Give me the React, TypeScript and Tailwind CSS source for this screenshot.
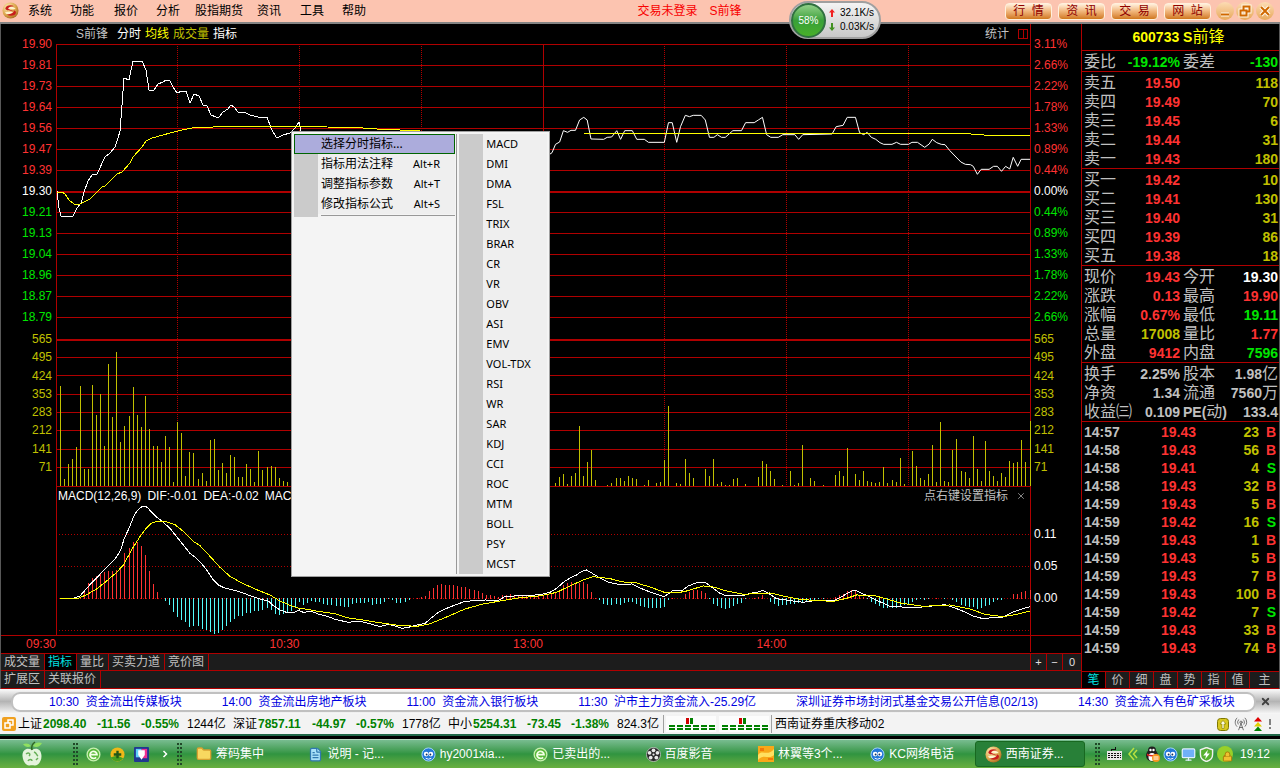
import React from "react";
import { Folder, FileText, Monitor, Lock, X, RadioTower } from "lucide-react";

const RED = "#b00000";

const priceLabels = ["19.90", "19.81", "19.73", "19.64", "19.56", "19.47", "19.39", "19.30", "19.21", "19.13", "19.04", "18.96", "18.87", "18.79"];
const pctLabels = ["3.11%", "2.66%", "2.22%", "1.78%", "1.33%", "0.89%", "0.44%", "0.00%", "0.44%", "0.89%", "1.33%", "1.78%", "2.22%", "2.66%"];
const volLabels = ["565", "495", "424", "353", "283", "212", "141", "71"];

const volume = [
  100, 7, 22, 27, 39, 100, 17, 17, 101, 71, 92, 40, 122, 69, 134, 44, 60, 70, 99, 71, 59, 90, 57, 40, 40, 24, 50, 39, 4, 64,
  53, 10, 34, 33, 7, 13, 5, 46, 47, 16, 23, 13, 31, 29, 9, 9, 22, 17, 4, 35, 16, 19, 20, 19, 8, 5, 4, 6, 9, 5,
  12, 8, 6, 10, 14, 7, 5, 9, 3, 6, 8, 11, 5, 4, 7, 9, 12, 6, 3, 5, 8, 6, 4, 9, 5, 7, 3, 6, 8, 4,
  5, 9, 6, 3, 7, 8, 5, 4, 6, 9, 3, 5, 7, 4, 8, 6, 3, 5, 9, 4, 6, 8, 5, 3, 7, 4, 6, 5, 8, 3, 0, 0,
  3, 9, 12, 2, 10, 13, 60, 10, 24, 36, 6, 0, 0, 1, 3, 8, 8, 5, 10, 8, 7, 0, 1, 6, 0, 3, 4, 26, 80, 0, 3, 2, 27, 13, 8, 0, 0,
  17, 10, 27, 2, 4, 1, 1, 7, 8, 0, 2, 0, 0, 9, 25, 22, 15, 7, 0, 1, 0, 15, 1, 3, 41, 0, 8, 5, 0, 1, 0, 0, 11, 15, 10, 38, 0,
  12, 6, 15, 5, 4, 3, 4, 19, 3, 6, 4, 28, 2, 0, 35, 20, 8, 6, 12, 41, 4, 64, 5, 4, 36, 47, 15, 14, 8, 50, 17, 5, 45, 15, 10,
  5, 13, 9, 25, 23, 24, 46, 24, 65,
];

const macd = [
  0, 0, 0, 0, 1, 2, 8, 16, 21, 23, 25, 27, 28, 28, 29, 31, 46, 51, 57, 57, 53, 44, 28, 15, 7, 0, -3, -7, -14, -19, -22, -24, -29,
  -28, -28, -31, -32, -34, -36, -35, -32, -28, -24, -21, -18, -18, -15, -15, -13, -13, -12, -10, -12, -16, -17, -16,
  -14, -13, -9, -4, -7, -5, -3, -4, -4, -6, -7, -7, -8, -8, -9, -9, -6, -5, -5, -5, -4, -7, -6, -6, -4, -1, -2, -5, -5, -4,
  -2, 0, 1, 2, 3, 8, 11, 14, 15, 14, 14, 14, 13, 12, 12, 10, 9, 8, 6, 4, 4, 3, 2, 4, 4, 5, 4, 3, 3, 3, 3, 3, 3, 4, 4, 5, 7, 9,
  14, 16, 17, 15, 16, 17, 15, 7, 1, -2, -6, -7, -7, -6, -7, -5, -4, -4, -6, -8, -9, -10, -10, -10, -10, -9, -2, 1, 0, 0, 5, 7,
  9, 9, 8, 6, -1, -6, -8, -10, -11, -10, -8, -6, -5, -1, 0, 1, 2, 4, 0, -4, -6, -8, -7, -7, -6, -6, -5, -4, -3, -3, -2, -1,
  -1, 0, 0, 2, 4, 5, 8, 9, 9, 4, 2, -1, -4, -6, -8, -10, -10, -10, -10, -8, -7, -6, -4, -2, -1, -2, -1, 0, 1, 0, -1, 0, -2,
  -4, -7, -8, -9, -9, -11, -10, -8, -7, -4, -2, -2, 0, 0, 5, 5, 7, 8, 9,
];

const minuteX = (i: number) => Math.floor(56 + ((i + 1) * 974) / 240);

function PriceChart() {
  return (
    <svg viewBox="56 44 975 443" preserveAspectRatio="none" shapeRendering="crispEdges" className="block h-[443px] w-full" aria-label="分时走势">
      {[44, 65, 86, 107, 128, 149, 170, 212, 233, 254, 275, 296, 317, 357, 375, 394, 412, 430, 449, 467, 486].map((y) => (
        <rect key={y} x="56" y={y} width="975" height="1" fill={RED} />
      ))}
      <rect x="56" y="191" width="975" height="2" fill={RED} />
      <rect x="56" y="339" width="975" height="2" fill={RED} />
      {[177, 299, 421, 664, 786, 908].map((x) => (
        <line key={x} x1={x + 0.5} x2={x + 0.5} y1="46" y2="486" stroke={RED} strokeDasharray="1 1" />
      ))}
      <rect x="543" y="44" width="1" height="443" fill={RED} />
      <rect x="56" y="44" width="1" height="443" fill={RED} />
      <rect x="1030" y="44" width="1" height="443" fill={RED} />
      {volume.map((v, i) => (v > 0 ? <rect key={i} x={minuteX(i)} y={486 - v} width="1" height={v} fill="#c0c000" /> : null))}
      <g fill="none" stroke="#ffffff">
        <polyline points="57,191 59,208 61,216 73,216 77,208 81,203 82,200 84,192 88,181 92,175 97,174 105,157 110,153 115,147 118,138 120,131 122,105 124,78 129,80 133,61 142,61 146,70 149,90 154,90 158,84 163,82 166,80 170,81 173,87 177,93 182,91 186,91 190,103 194,94 199,96 203,105 207,106 211,115 216,117 219,117 223,112 228,109 231,105 234,107 238,112 246,113 250,115 258,117 267,117 271,128 276,137 279,137 283,135 290,133 295,128 299,122 301,131 330,137 400,134 500,138 540,158 549,155" />
        <polyline
          transform="translate(540 100) scale(0.3444 0.3333)"
          vectorEffect="non-scaling-stroke"
          points="28,163 35,158 45,133 57,126 68,92 80,97 90,91 103,91 115,60 127,52 137,60 148,117 185,118 195,112 208,111 223,92 234,118 246,92 268,92 281,118 303,118 315,127 361,127 373,68 384,68 397,127 408,80 422,46 434,50 445,46 468,46 480,60 492,112 505,112 515,104 527,112 538,112 560,92 585,92 597,68 622,68 634,60 646,52 658,104 670,112 692,112 705,104 740,104 751,118 763,104 848,102 860,80 880,76 892,52 916,52 928,98 940,104 950,97 962,112 975,118 987,128 998,133 1022,133 1035,127 1047,133 1070,133 1080,127 1096,127 1117,142 1130,132 1139,118 1152,128 1165,133 1176,134 1190,152 1222,186 1235,193 1250,194 1258,199 1270,223 1281,208 1304,208 1317,199 1328,199 1340,214 1352,199 1364,207 1374,172 1387,199 1397,178 1423,178"
        />
      </g>
      <polyline
        fill="none"
        stroke="#ffff00"
        points="57,192 62,192 65,194 69,200 74,204 80,204 90,199 97,192 102,187 105,186 110,181 117,174 122,172 130,163 133,157 142,147 146,141 152,138 163,135 170,133 182,130 192,128 213,127 233,126 300,126 327,127 363,128 377,129 400,130 420,131 458,133 549,134 584,134 585,133 958,133 984,135 1015,135 1030,136"
      />
    </svg>
  );
}

function MacdChart() {
  return (
    <svg viewBox="56 504 975 132" preserveAspectRatio="none" shapeRendering="crispEdges" className="block h-[132px] w-full" aria-label="MACD">
      {[534, 566, 598, 630].map((y) => (
        <line key={y} x1="59" x2="1030" y1={y + 0.5} y2={y + 0.5} stroke={RED} strokeDasharray="1 2" />
      ))}
      <rect x="56" y="504" width="1" height="132" fill={RED} />
      <rect x="1030" y="504" width="1" height="132" fill={RED} />
      {macd.map((v, i) =>
        v === 0 ? null : (
          <rect key={i} x={minuteX(i)} y={v > 0 ? 599 - v : 598} width="1" height={Math.abs(v)} fill={v > 0 ? "#ff3232" : "#54fcfc"} />
        ),
      )}
      <g fill="none" stroke="#ffffff">
        <polyline
          transform="translate(0 485) scale(0.3333)"
          vectorEffect="non-scaling-stroke"
          points="180,340 220,340 240,333 255,316 277,291 300,268 325,242 345,222 362,196 373,160 388,128 400,97 410,79 422,67 432,63 442,67 455,82 470,96 490,112 510,130 530,155 550,180 570,205 590,220 610,242 625,262 640,285 655,300 672,308 700,315 730,324 755,334 780,342 805,348 820,362 840,375 862,383 880,384 900,374"
        />
        <polyline
          transform="translate(285 570) scale(0.3333)"
          vectorEffect="non-scaling-stroke"
          points="42,122 55,127 80,124 100,132 130,140 150,148 190,157 220,153 250,160 285,170 310,163 330,168 350,175 370,172 395,165 420,160 440,143 460,127 480,117 505,107 540,94 600,90 640,91 660,80 700,77 750,75 770,73"
        />
        <polyline
          transform="translate(540 380) scale(0.3333)"
          vectorEffect="non-scaling-stroke"
          points="0,644 30,637 50,625 70,607 90,594 110,585 125,574 140,570 155,579 180,594 205,607 240,614 275,612 300,624 330,636 373,650 397,633 425,633 445,618 470,608 495,606 510,618 540,640 560,648 605,648 630,640 655,636 667,631 685,640 710,656 750,662 790,667 825,662 880,663 905,650 930,636 945,630 970,642 1000,656 1030,670 1050,680 1115,682 1150,681 1215,674 1240,682 1270,694 1300,708 1325,715 1350,714 1390,711 1420,696 1450,686 1470,680"
        />
      </g>
      <g fill="none" stroke="#ffff00">
        <polyline
          transform="translate(0 485) scale(0.3333)"
          vectorEffect="non-scaling-stroke"
          points="180,340 235,340 260,329 290,312 320,288 350,262 370,240 385,213 400,186 420,155 440,128 455,114 475,108 500,111 525,119 550,139 580,169 600,182 630,214 660,247 690,274 725,294 770,314 810,330 840,348 870,361 900,371"
        />
        <polyline
          transform="translate(285 570) scale(0.3333)"
          vectorEffect="non-scaling-stroke"
          points="42,114 100,124 150,131 185,143 240,151 290,159 340,166 395,169 430,163 480,143 540,117 590,103 640,94 700,84 740,80 768,77"
        />
        <polyline
          transform="translate(540 380) scale(0.3333)"
          vectorEffect="non-scaling-stroke"
          points="0,648 50,637 90,618 130,600 160,590 210,596 250,606 290,609 330,621 373,637 430,636 470,624 490,618 520,621 560,633 610,643 690,639 730,648 780,658 830,662 880,664 920,655 950,645 1000,646 1040,657 1085,670 1150,679 1230,675 1290,687 1335,703 1390,710 1430,703 1470,693"
        />
      </g>
      <rect x="56" y="635" width="975" height="1" fill={RED} />
    </svg>
  );
}

function Logo() {
  return (
    <svg viewBox="0 0 18 18" className="size-[17px] shrink-0">
      <defs>
        <radialGradient id="gold" cx="0.35" cy="0.3" r="0.8">
          <stop offset="0" stopColor="#fff0b8" />
          <stop offset="0.6" stopColor="#dba54c" />
          <stop offset="1" stopColor="#a06018" />
        </radialGradient>
      </defs>
      <circle cx="9" cy="9" r="8.500" fill="url(#gold)" />
      <path d="M6 7 C7.500 5 12 4.500 14.500 7 C12.500 8 10 7.500 6 7Z" fill="#fff4d0" />
      <path d="M3 11 C6 10 10 10 12 11.500 C9 13.500 5 13.500 3 11Z" fill="#fff4d0" />
      <path d="M13 4.500 C9 2.500 4 3.500 3.500 7 C4 9.500 9 8.800 12 10.200 C11.500 8.500 7.500 8.500 6.500 7 C7 5 10 4.800 13 4.500Z" fill="#c81c1c" />
      <path d="M12 8.500 C13.500 10 12 12.500 5 13.500 C9 15.800 14.500 14.500 14.800 11.500 C15 9.800 13.500 9 12 8.500Z" fill="#c81c1c" />
    </svg>
  );
}

function BrowserIcon() {
  return (
    <svg viewBox="0 0 16 16" className="size-[15px] shrink-0">
      <circle cx="8" cy="8" r="6.800" fill="#58b838" stroke="#c8f0b0" strokeWidth="1.400" />
      <path d="M4 8.200H11.800A3.800 3.800 0 1 0 10.800 11" fill="none" stroke="#f4ffe8" strokeWidth="1.800" />
    </svg>
  );
}

function CallIcon() {
  return (
    <svg viewBox="0 0 16 16" className="size-[15px] shrink-0">
      <circle cx="8" cy="8" r="7" fill="#2478d8" stroke="#a8d8ff" />
      <circle cx="5.500" cy="7.500" r="2.500" fill="#fff" />
      <circle cx="10.500" cy="7.500" r="2.500" fill="#fff" />
      <circle cx="6" cy="8" r="1" fill="#103060" />
      <circle cx="10" cy="8" r="1" fill="#103060" />
      <path d="M5 12 Q8 14 11 12" stroke="#fff" fill="none" />
    </svg>
  );
}

const menuItems = [
  ["系统", "w-[42px]"],
  ["功能", "w-[44px]"],
  ["报价", "w-[42px]"],
  ["分析", "w-[39px]"],
  ["股指期货", "w-[62px]"],
  ["资讯", "w-[43px]"],
  ["工具", "w-[42px]"],
  ["帮助", "w-[42px]"],
];

function TitleBar() {
  return (
    <header className="flex h-6 items-start border-b-2 border-[#848484] bg-[#fcc4b0] pl-[2px]">
      <div className="flex h-[21px] items-center">
        <Logo />
      </div>
      <nav className="flex h-[21px] items-center pl-[9px] text-xs text-black">
        {menuItems.map(([t, w]) => (
          <button key={t} className={`${w} text-left whitespace-nowrap`}>
            {t}
          </button>
        ))}
      </nav>
      <div className="flex h-[21px] flex-1 items-center justify-center gap-3 pr-[10px] text-xs text-[#f80000]">
        <span>交易未登录</span>
        <span>S前锋</span>
      </div>
      <div className="flex h-[21px] items-center gap-[6px] pt-[2px] text-xs text-[#900000]">
        {["行  情", "资  讯", "交  易", "网  站"].map((t) => (
          <button key={t} className="h-[17px] w-[47px] rounded-[4px] border border-[#fff0dc] bg-linear-to-b from-[#fff0dc] via-[#f0b478] to-[#d07818] leading-[15px] whitespace-pre">
            {t}
          </button>
        ))}
      </div>
      <div className="flex h-[21px] items-center gap-[2px] pr-[6px] pl-[5px]">
        {["最小化", "还原", "关闭"].map((t, i) => (
          <button key={t} aria-label={t} className="size-[18px] rounded-full bg-linear-to-b from-[#fcdcb4] to-[#e8a858]">
            <svg viewBox="0 0 18 18" className="size-[18px]" fill="none">
              {[0, 1].map((k) => (
                <g key={k} stroke={k ? "#d06800" : "#fff8e8"} strokeWidth={k ? 2 : 4}>
                  {i === 0 && <path d="M5 12.500h8" />}
                  {i === 1 && <path d="M4.500 8.500h6v5h-6zM7.500 8V4.500h6v5H11" />}
                  {i === 2 && <path d="M5 5l8 8M13 5l-8 8" />}
                </g>
              ))}
            </svg>
          </button>
        ))}
      </div>
    </header>
  );
}

function SpeedWidget() {
  return (
    <div className="absolute top-px left-[789px] flex h-[38px] w-[92px] items-center rounded-full border-2 border-[#a0a0a0] bg-linear-to-b from-[#f4f4f4] to-[#c8c8c8] text-black">
      <div className="flex size-[35px] shrink-0 items-center justify-center rounded-full border-2 border-[#307040] bg-linear-to-b from-[#90d088] via-[#38a038] to-[#48b028] text-[10px] text-white">58%</div>
      <div className="pl-[2px] text-[10px] leading-[14px]">
        <div className="flex gap-1">
          <svg viewBox="0 0 8 8" className="mt-[3px] size-2">
            <path d="M4 0l3 3.500H5V8H3V3.500H1z" fill="#f02020" />
          </svg>
          32.1K/s
        </div>
        <div className="flex gap-1">
          <svg viewBox="0 0 8 8" className="mt-[3px] size-2">
            <path d="M4 8l3-3.500H5V0H3v4.500H1z" fill="#409020" />
          </svg>
          0.03K/s
        </div>
      </div>
    </div>
  );
}

const axisTone = (i: number) => (i < 7 ? "text-[#ff3232]" : i === 7 ? "text-white" : "text-[#00e600]");

function AxisLabels({ labels, className }: { labels: string[]; className: string }) {
  return (
    <div className={`flex flex-col pt-[10px] text-xs ${className}`}>
      {labels.map((t, i) => (
        <span key={i} className={`h-[21px] leading-[21px] ${axisTone(i)}`}>
          {t}
        </span>
      ))}
      <div className="mt-[2px] flex h-[146px] flex-col justify-between text-[#c0c000]">
        {volLabels.map((t) => (
          <span key={t} className="h-[18px] leading-[18px]">
            {t}
          </span>
        ))}
      </div>
    </div>
  );
}

function ChartPane() {
  return (
    <section className="flex min-w-0 flex-1 flex-col border-l border-[#585858]">
      <div className="flex">
        <AxisLabels labels={priceLabels} className="w-[55px] shrink-0 pr-1 text-right" />
        <div className="min-w-0 flex-1">
          <div className="flex h-5 items-center gap-1 border-r border-[#b00000] pr-[2px] pl-5 text-xs text-[#c0c0c0]">
            <span className="mr-[5px]">S前锋</span>
            <span className="text-white">分时</span>
            <span className="text-[#ffff00]">均线</span>
            <span className="text-[#c0c000]">成交量</span>
            <span className="text-white">指标</span>
            <span className="mr-[5px] ml-auto">统计</span>
            <span className="flex h-[10px] w-[10px] border border-[#b00000]">
              <span className="ml-auto w-1 border-l border-[#b00000]" />
            </span>
          </div>
          <PriceChart />
          <div className="flex h-[17px] items-center border-x border-[#b00000] pr-1 pl-px text-xs whitespace-nowrap text-white">
            <span>MACD(12,26,9)</span>
            <span className="pl-[6px]">DIF:-0.01</span>
            <span className="pl-[6px]">DEA:-0.02</span>
            <span className="pl-[6px]">MACD:0.01</span>
            <span className="mr-2 ml-auto text-[#c0c0c0]">点右键设置指标</span>
            <button aria-label="关闭指标" className="text-[#a0a0a0]">
              <X size={10} strokeWidth={2} />
            </button>
          </div>
          <MacdChart />
        </div>
        <div className="w-[50px] shrink-0">
          <AxisLabels labels={pctLabels} className="pl-[3px]" />
          <div className="mt-[42px] flex flex-col pl-[3px] text-xs text-white">
            {["0.11", "0.05", "0.00"].map((t) => (
              <span key={t} className="h-8 leading-8">
                {t}
              </span>
            ))}
          </div>
        </div>
      </div>
      <div className="-mt-px flex h-[17px] text-xs leading-4 text-[#ff3232]">
        <span className="w-[55px] border-t border-[#b00000] text-right">09:30</span>
        <div className="grid flex-1 grid-cols-4 border-t border-r border-[#b00000] text-right">
          <span>10:30</span>
          <span>13:00</span>
          <span>14:00</span>
        </div>
        <span className="w-[50px] border-t border-[#b00000]" />
      </div>
      <div className="mt-px flex h-[17px] border-t border-[#b00000] bg-[#1c1c1c] text-xs text-[#c0c0c0]">
        {["成交量", "指标", "量比", "买卖力道", "竞价图"].map((t) => (
          <button key={t} className={`border-r border-[#b00000] pr-1 pl-[3px] leading-4 ${t === "指标" ? "bg-black text-[#00e0e0]" : ""}`}>
            {t}
          </button>
        ))}
        <div className="ml-auto flex text-[#e0e0e0]">
          {["+", "−", "0"].map((t) => (
            <button key={t} className="w-4 border-l border-[#b00000] text-[11px] leading-4 last:w-[19px]">
              {t}
            </button>
          ))}
        </div>
      </div>
      <div className="flex h-[19px] border-y border-[#b00000] bg-[#1c1c1c] text-xs text-[#c0c0c0]">
        {["扩展区", "关联报价"].map((t) => (
          <button key={t} className="border-r border-[#b00000] pr-1 pl-[3px] leading-[17px]">
            {t}
          </button>
        ))}
      </div>
    </section>
  );
}

const R = "text-[#ff3232]";
const G = "text-[#00e600]";
const Y = "text-[#c0c000]";
const C = "text-[#c0c0c0]";
const W = "text-white";

type QuoteRow = [string, string, string, string, string, string];

const groups: QuoteRow[][] = [
  [["委比", "-19.12%", G, "委差", "-130", G]],
  [
    ["卖五", "19.50", R, "", "118", Y],
    ["卖四", "19.49", R, "", "70", Y],
    ["卖三", "19.45", R, "", "6", Y],
    ["卖二", "19.44", R, "", "31", Y],
    ["卖一", "19.43", R, "", "180", Y],
  ],
  [
    ["买一", "19.42", R, "", "10", Y],
    ["买二", "19.41", R, "", "130", Y],
    ["买三", "19.40", R, "", "31", Y],
    ["买四", "19.39", R, "", "86", Y],
    ["买五", "19.38", R, "", "18", Y],
  ],
  [
    ["现价", "19.43", R, "今开", "19.30", W],
    ["涨跌", "0.13", R, "最高", "19.90", R],
    ["涨幅", "0.67%", R, "最低", "19.11", G],
    ["总量", "17008", Y, "量比", "1.77", R],
    ["外盘", "9412", R, "内盘", "7596", G],
  ],
  [
    ["换手", "2.25%", C, "股本", "1.98亿", C],
    ["净资", "1.34", C, "流通", "7560万", C],
    ["收益㈢", "0.109", C, "PE(动)", "133.4", C],
  ],
];

const ticks: [string, string, string, string][] = [
  ["14:57", "19.43", "23", "B"],
  ["14:58", "19.43", "56", "B"],
  ["14:58", "19.41", "4", "S"],
  ["14:58", "19.43", "32", "B"],
  ["14:59", "19.43", "5", "B"],
  ["14:59", "19.42", "16", "S"],
  ["14:59", "19.43", "1", "B"],
  ["14:59", "19.43", "5", "B"],
  ["14:59", "19.43", "7", "B"],
  ["14:59", "19.43", "100", "B"],
  ["14:59", "19.42", "7", "S"],
  ["14:59", "19.43", "33", "B"],
  ["14:59", "19.43", "74", "B"],
];

/* Latin and digits are set bold at 14px, Chinese glyphs regular at 16px. */
function Mixed({ text }: { text: string }) {
  return (
    <>
      {text.split(/([\u3200-\u9fff]+)/).map((part, i) =>
        i % 2 ? (
          <span key={i} className="text-base leading-none font-normal">
            {part}
          </span>
        ) : (
          part
        ),
      )}
    </>
  );
}

function QuotePane() {
  return (
    <aside className="flex w-[199px] shrink-0 flex-col border-r border-l border-r-[#585858] border-l-[#b00000] text-sm font-bold">
      <h1 className="h-[27px] border-b border-[#b00000] pr-1 text-center leading-[27px] text-[#ffff00]">
        <Mixed text="600733 S前锋" />
      </h1>
      {groups.map((rows, g) => (
        <div key={g} className="border-b border-[#b00000] pt-px">
          <table className="w-full table-fixed border-collapse whitespace-nowrap">
            <colgroup>
              <col className="w-[44px]" />
              <col className="w-[54px]" />
              <col className="w-[44px]" />
              <col />
            </colgroup>
            <tbody>
              {rows.map((r) => (
                <tr key={r[0]} className="h-[19px] leading-[18px]">
                  <th className="p-0 pl-[2px] text-left text-[#c0c0c0]">
                    <Mixed text={r[0]} />
                  </th>
                  <td className={`p-0 text-right ${r[2]}`}>{r[1]}</td>
                  <td className="p-0 pl-[3px] text-[#c0c0c0]">
                    <Mixed text={r[3]} />
                  </td>
                  <td className={`p-0 pr-px text-right ${r[5]}`}>
                    <Mixed text={r[4]} />
                  </td>
                </tr>
              ))}
            </tbody>
          </table>
        </div>
      ))}
      <table className="mt-px w-full table-fixed border-collapse">
        <colgroup>
          <col className="w-[54px]" />
          <col className="w-[60px]" />
          <col />
          <col className="w-5" />
        </colgroup>
        <tbody>
          {ticks.map((t, i) => (
            <tr key={i} className="h-[18px] leading-[18px]">
              <td className="p-0 pl-[2px] text-[#c0c0c0]">{t[0]}</td>
              <td className="p-0 text-right text-[#ff3232]">{t[1]}</td>
              <td className="p-0 text-right text-[#c0c000]">{t[2]}</td>
              <td className={`p-0 pr-[3px] text-right ${t[3] === "B" ? "text-[#ff3232]" : "text-[#00e600]"}`}>{t[3]}</td>
            </tr>
          ))}
        </tbody>
      </table>
      <div className="mt-auto flex h-[18px] border-y border-[#b00000] bg-[#1c1c1c] text-xs font-normal text-[#c0c0c0]">
        {["笔", "价", "细", "盘", "势", "指", "值", "主"].map((t) => (
          <button key={t} className={`w-6 border-r border-[#b00000] leading-4 last:flex-1 last:border-r-0 ${t === "笔" ? "bg-black text-[#00e0e0]" : ""}`}>
            {t}
          </button>
        ))}
      </div>
    </aside>
  );
}

const subItems = ["MACD", "DMI", "DMA", "FSL", "TRIX", "BRAR", "CR", "VR", "OBV", "ASI", "EMV", "VOL-TDX", "RSI", "WR", "SAR", "KDJ", "CCI", "ROC", "MTM", "BOLL", "PSY", "MCST"];

function ContextMenu() {
  return (
    <div role="menu" className="absolute top-[131px] left-[291px] flex w-[259px] border border-[#a0a0a0] bg-[#f4f4f4] p-[2px] font-['Noto_Sans','Noto_Sans_CJK_SC',sans-serif] text-black">
      <div className="flex w-[163px] flex-col text-xs">
        <button role="menuitem" className="h-5 w-[161px] border border-[#006400] bg-[#acacdc] pl-[26px] text-left leading-[18px]">
          选择分时指标...
        </button>
        {[
          ["指标用法注释", "Alt+R"],
          ["调整指标参数", "Alt+T"],
          ["修改指标公式", "Alt+S"],
        ].map(([t, k]) => (
          <button key={t} role="menuitem" className="flex h-5 w-[161px] items-center border-l-24 border-[#cbcbcb] bg-[#efefef] pr-[15px] pl-[3px]">
            <span>{t}</span>
            <span className="ml-auto text-[11px]">{k}</span>
          </button>
        ))}
        <div className="w-[161px] border-l-24 border-[#cbcbcb] py-px pl-[3px]">
          <div className="h-px bg-[#989898]" />
        </div>
      </div>
      <div className="w-[91px] border-l border-[#989898] pl-[2px] text-[11px]">
        {subItems.map((t) => (
          <button key={t} role="menuitem" className="block h-5 w-full border-l-24 border-[#cbcbcb] bg-[#efefef] pl-[3px] text-left leading-5">
            {t}
          </button>
        ))}
      </div>
    </div>
  );
}

function NewsBar() {
  return (
    <div className="flex h-[25px] items-center bg-linear-to-b from-[#fcfcfc] via-[#b4b4b4] to-[#f8f8f8] pl-[11px]">
      <div className="flex h-5 min-w-0 flex-1 items-center gap-10 overflow-hidden rounded-[9px] border-2 border-[#c0c0c0] bg-white pl-9 text-xs whitespace-nowrap text-[#0000e0]">
        {["10:30 资金流出传媒板块", "14:00 资金流出房地产板块", "11:00 资金流入银行板块", "11:30 沪市主力资金流入-25.29亿", "深圳证券市场封闭式基金交易公开信息(02/13)", "14:30 资金流入有色矿采板块"].map((t) => (
          <a key={t} href="#" className="whitespace-pre">
            {t.replace(" ", "  ")}
          </a>
        ))}
      </div>
      <button aria-label="关闭资讯" className="flex w-6 justify-center pr-[6px] text-[#404040]">
        <X size={11} strokeWidth={4} />
      </button>
    </div>
  );
}

const indices = [
  ["上证", "2098.40", "-11.56", "-0.55%", "1244亿"],
  ["深证", "7857.11", "-44.97", "-0.57%", "1778亿"],
  ["中小", "5254.31", "-73.45", "-1.38%", "824.3亿"],
];

function Meter() {
  return (
    <svg viewBox="0 0 50 16" className="h-4 w-[50px]" shapeRendering="crispEdges">
      <rect width="50" height="16" fill="#fcfcfc" />
      <rect x="20" y="2" width="3" height="6" fill="#d00000" />
      <rect x="24" y="2" width="3" height="6" fill="#008000" />
      {[0, 1, 2, 3, 4, 5].map((i) => (
        <g key={i} fill="#008000">
          <rect x={3 + i * 8} y="9" width="6" height="2" />
          <rect x={3 + i * 8} y="12" width="6" height="2" />
        </g>
      ))}
    </svg>
  );
}

function StatusBar() {
  return (
    <div className="flex h-[22px] items-center border-b-2 border-[#206848] bg-[#f3f3f3] pl-[2px] text-xs whitespace-nowrap text-black">
      <svg viewBox="0 0 14 14" className="mr-[2px] size-[14px] shrink-0">
        <rect width="14" height="14" rx="2" fill="#f0a020" />
        <path d="M3 6h5v5H3zM6 6V3h5v5H8" fill="none" stroke="#fff" strokeWidth="1.500" />
      </svg>
      {indices.map((r) => (
        <div key={r[0]} className="flex w-[215px]">
          <span className="w-[25px]">{r[0]}</span>
          <b className="w-[54px] text-[#008000]">{r[1]}</b>
          <b className="w-[44px] text-[#008000]">{r[2]}</b>
          <b className="w-[46px] text-[#008000]">{r[3]}</b>
          <span>{r[4]}</span>
        </div>
      ))}
      <div className="flex h-[18px] items-center gap-[3px] border-x border-[#a0a0a0] px-[2px]">
        <Meter />
        <Meter />
      </div>
      <span className="pl-[3px]">西南证券重庆移动02</span>
      <div className="ml-auto flex items-center gap-[5px] pr-2">
        <svg viewBox="0 0 12 13" className="h-[13px] w-3">
          <rect x="0.500" y="0.500" width="11" height="12" rx="3" fill="#d8c820" stroke="#807800" />
          <path d="M6 2.500L9 6H7v4.500H5V6H3z" fill="#fffce0" stroke="#807800" strokeWidth="0.600" />
        </svg>
        <RadioTower size={14} strokeWidth={1.5} className="text-[#606060]" />
        <svg viewBox="0 0 10 14" className="h-[14px] w-[10px]">
          <path d="M5 0l4 4.500H1z" fill="#e00000" />
          <path d="M5 5l4 4.500H1z" fill="#e0d000" />
          <path d="M5 9.500l4 4.500H1z" fill="#008000" />
        </svg>
        <svg viewBox="0 0 4 10" className="h-[10px] w-1">
          <path d="M1 0h2v6H1zM1 8h2v2H1z" fill="#808080" />
        </svg>
      </div>
    </div>
  );
}

function Grip() {
  return (
    <svg viewBox="0 0 5 24" className="h-6 w-[5px] shrink-0" shapeRendering="crispEdges">
      {[0, 4, 8, 12, 16, 20].map((y) => (
        <g key={y} fill="#204828">
          <rect x="0" y={y + 1} width="2" height="2" />
          <rect x="3" y={y + 1} width="2" height="2" />
        </g>
      ))}
    </svg>
  );
}

function ReelIcon() {
  return (
    <svg viewBox="0 0 16 16" className="size-[15px] shrink-0">
      <circle cx="8" cy="8" r="7.500" fill="#282828" stroke="#d0d0d0" strokeWidth="0.800" />
      {[
        [8, 3.5],
        [12.2, 6.2],
        [11, 11.2],
        [5, 11.2],
        [3.8, 6.2],
      ].map(([x, y]) => (
        <circle key={x} cx={x} cy={y} r="2" fill="#e8e8e8" />
      ))}
      <circle cx="8" cy="8" r="1.200" fill="#e8e8e8" />
    </svg>
  );
}

function PhotoIcon() {
  return (
    <svg viewBox="0 0 16 16" className="size-4 shrink-0">
      <rect width="16" height="16" fill="#f8a818" />
      <path d="M0 9C4 3 10 11 16 3V9C11 14 5 7 0 14Z" fill="#ffe060" />
      <path d="M2 2h4v3H2zM10 12h5v2h-5z" fill="#f07808" />
    </svg>
  );
}

const tasks: [string, React.ReactNode][] = [
  ["筹码集中", <Folder key="i" size={16} fill="#f8d860" stroke="#d8a030" />],
  ["说明 - 记...", <FileText key="i" size={15} fill="#a8e0f8" stroke="#3078b0" />],
  ["hy2001xia...", <CallIcon key="i" />],
  ["已卖出的...", <BrowserIcon key="i" />],
  ["百度影音", <ReelIcon key="i" />],
  ["林翼等3个...", <PhotoIcon key="i" />],
  ["KC网络电话", <CallIcon key="i" />],
  ["西南证券...", <Logo key="i" />],
];

function TaskBar() {
  return (
    <footer className="mt-[3px] flex h-[29px] flex-1 items-center border-t border-[#b8dcc0] bg-linear-to-b from-[#78bc90] via-[#309440] to-[#68b040] text-xs whitespace-nowrap text-white">
      <button aria-label="开始" className="flex w-[73px] shrink-0 justify-center pr-[10px]">
        <svg viewBox="0 0 24 26" className="h-[26px] w-6">
          <path d="M12 9C8 6 2 8 2.500 15c.5 6 4 10 7 9.500 2-.5 3-.5 5 0 3.500.5 7-4 7-9.500C21.500 8 16 6 12 9Z" fill="#e4f4dc" />
          <path d="M6 13c3-2 5 0 3 2M14 11c3 1 2 3 4 4M8 20c1-2 4-2 4 0M16 19l2-2" stroke="#68b058" strokeWidth="1.500" fill="none" />
          <path d="M12 9C11 5 12 3 15 1" stroke="#306820" strokeWidth="1.500" fill="none" />
          <path d="M13 5c2-4 6-4 9-3-2 4-6 5-9 3ZM11 5C9 2 6 2 3 3c2 3 5 4 8 2Z" fill="#90e060" />
        </svg>
      </button>
      <Grip />
      <div className="flex w-[99px] shrink-0 items-center gap-[9px] pl-2">
        <BrowserIcon />
        <svg viewBox="0 0 16 16" className="size-[15px]">
          <circle cx="8" cy="8" r="7.500" fill="#f0b818" />
          <path d="M1 11a7.500 7.500 0 0 0 13 1l-6-3z" fill="#48a020" />
          <path d="M8 4v8M4 8h8" stroke="#205818" strokeWidth="2.500" />
        </svg>
        <svg viewBox="0 0 16 16" className="size-[15px]">
          <rect width="16" height="16" rx="1" fill="#203890" />
          <path d="M8 2h6v10H8z" fill="#f03090" />
          <path d="M2 2h6v9H2z" fill="#60d0f8" />
          <path d="M4.500 3.500h7v5l-3.500 5-3.500-5z" fill="#fff" />
        </svg>
        <svg viewBox="0 0 6 8" className="ml-1 h-2 w-[6px]" fill="none" stroke="#ffffff" strokeWidth="1.500">
          <path d="M1.500 1l3 3-3 3" />
        </svg>
      </div>
      <Grip />
      <div className="grid min-w-0 flex-1 grid-cols-8 pl-[14px]">
        {tasks.map(([t, icon]) => (
          <button key={t} className="-ml-2 flex h-[26px] items-center gap-1 rounded-[3px] border border-transparent pl-[7px] last:mr-[10px] last:border-[#186820] last:bg-[#288038] last:pl-[9px]">
            {icon}
            {t}
          </button>
        ))}
      </div>
      <div className="flex w-[185px] shrink-0 items-center gap-[3px]">
        <Grip />
        <svg viewBox="0 0 15 14" className="mr-[3px] ml-1 h-[14px] w-[15px]" shapeRendering="crispEdges">
          <path d="M4 4V2h4V0" fill="none" stroke="#101010" />
          <rect x="0" y="4" width="15" height="9" fill="#e8e8e8" />
          <path d="M1 6.500h13M1 8.500h13M1 10.500h13" stroke="#101010" strokeDasharray="2 1" />
        </svg>
        <svg viewBox="0 0 10 14" className="mr-[3px] h-[14px] w-[10px]" fill="none" stroke="#b8e040" strokeWidth="1.500">
          <path d="M6 1L1 7l5 6M9 3L5.500 7 9 11" />
        </svg>
        <svg viewBox="0 0 16 16" className="size-4">
          <ellipse cx="8" cy="9.500" rx="6" ry="6" fill="#202020" />
          <circle cx="8" cy="4.500" r="4" fill="#202020" />
          <ellipse cx="8" cy="11" rx="3.500" ry="4" fill="#fff" />
          <circle cx="6.500" cy="4" r="1.200" fill="#fff" />
          <circle cx="9.500" cy="4" r="1.200" fill="#fff" />
          <path d="M3 7.500q5 3 10 0v2q-5 2-10 0z" fill="#e02020" />
          <circle cx="12" cy="12" r="4" fill="#f89820" />
          <path d="M9.500 11h5M9.500 13h5" stroke="#fff" />
        </svg>
        <CallIcon />
        <Monitor size={15} fill="#70b0f8" stroke="#e0f0ff" />
        <svg viewBox="0 0 16 16" className="size-[15px]">
          <path d="M8 .5L14.500 3v5c0 4-3 6.500-6.500 7.500C4.500 14.500 1.500 12 1.500 8V3z" fill="#58b030" stroke="#f0f0f0" strokeWidth="1.500" />
          <path d="M9.500 3L4.500 9H7.500L6.500 13 11.500 7H8.500z" fill="#fff" />
        </svg>
        <span className="flex size-4 items-end justify-end rounded-full bg-[#98d028]">
          <Lock size={11} fill="#f0c030" stroke="#a87808" />
        </span>
        <time className="pl-1">19:12</time>
      </div>
    </footer>
  );
}

export default function App() {
  return (
    <div className="relative flex min-h-screen flex-col bg-black font-['Liberation_Sans','Noto_Sans_CJK_SC',sans-serif]">
      <TitleBar />
      <main className="flex">
        <ChartPane />
        <QuotePane />
      </main>
      <NewsBar />
      <StatusBar />
      <TaskBar />
      <SpeedWidget />
      <ContextMenu />
    </div>
  );
}
